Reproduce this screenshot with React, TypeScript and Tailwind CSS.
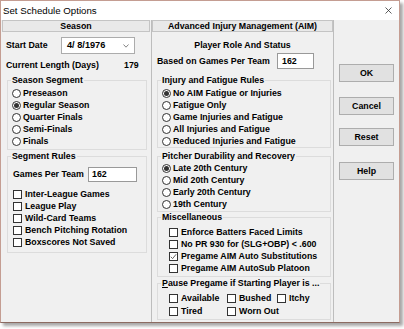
const F = "font-['Liberation_Sans',Arial,sans-serif]";

function Radio({ label, on = false }: { label: string; on?: boolean }) {
  return (
    <div className="flex h-[12px] items-center">
      <span className="flex h-[9px] w-[9px] shrink-0 items-center justify-center rounded-full border border-[#333] bg-white">
        {on && <span className="h-[5px] w-[5px] rounded-full bg-[#333]" />}
      </span>
      <span className="ml-[2px] whitespace-nowrap">{label}</span>
    </div>
  );
}

function Check({ label, on = false, h = "h-[12px]" }: { label: string; on?: boolean; h?: string }) {
  return (
    <div className={`flex items-center ${h}`}>
      <span className="flex h-[9px] w-[9px] shrink-0 items-center justify-center border border-[#333] bg-white">
        {on && (
          <svg width="7" height="7" viewBox="0 0 7 7">
            <polyline points="0.8,3.8 2.6,5.6 6.2,1.2" fill="none" stroke="#555" strokeWidth="0.9" />
          </svg>
        )}
      </span>
      <span className="ml-[3px] whitespace-nowrap">{label}</span>
    </div>
  );
}

function Btn({ label, mt }: { label: string; mt: string }) {
  return (
    <button className={`${mt} flex h-[18px] w-[55px] items-center justify-center border border-[#adadad] bg-[#e1e1e1] font-bold`}>
      {label}
    </button>
  );
}

export default function App() {
  return (
    <div className={`h-[329px] w-[404px] bg-white ${F} text-[8.8px] font-bold leading-[11px] text-black`}>
      <div className="flex h-[323px] w-[400px] flex-col border border-[#c49d92] border-b-[#8c6b62] bg-[#f0f0f0] shadow-[3px_3px_3px_rgba(0,0,0,0.35)]">
        {/* title bar */}
        <div className="flex h-[19px] items-center justify-between bg-white pl-[2px] pr-[7px]">
          <span className="text-[9.7px] font-normal">Set Schedule Options</span>
          <svg width="7" height="7" viewBox="0 0 7 7">
            <path d="M0.5 0.5 L6.5 6.5 M6.5 0.5 L0.5 6.5" stroke="#333" strokeWidth="0.8" />
          </svg>
        </div>

        <div className="flex flex-1">
          {/* Season column */}
          <div className="flex w-[150px] flex-col">
            <div className="mx-[1px] flex h-[12px] items-center justify-center border border-[#c4c4c4] bg-[#e9e9e9]">
              Season
            </div>

            <div className="mt-[5px] flex h-[17px] items-center pl-[5px]">
              <span className="w-[55px]">Start Date</span>
              <div className="flex h-[17px] w-[74px] items-center justify-between border border-[#acacac] bg-white pl-[5px] pr-[5px]">
                <span className="text-[9.2px]">4/ 8/1976</span>
                <svg width="6" height="4" viewBox="0 0 6 4">
                  <polyline points="0.5,0.5 3,3.2 5.5,0.5" fill="none" stroke="#666" strokeWidth="0.8" />
                </svg>
              </div>
            </div>

            <div className="mt-[5px] flex h-[12px] items-center pl-[5px]">
              <span className="w-[118px]">Current Length (Days)</span>
              <span>179</span>
            </div>

            <fieldset className="ml-[6px] mt-[4px] w-[140px] border border-[#dcdcdc] pb-[2px] pl-[4px] pt-[1px]">
              <legend className="-ml-[1px] px-[1px] leading-[11px]">Season Segment</legend>
              <Radio label="Preseason" />
              <Radio label="Regular Season" on />
              <Radio label="Quarter Finals" />
              <Radio label="Semi-Finals" />
              <Radio label="Finals" />
            </fieldset>

            <fieldset className="ml-[6px] mt-[1px] w-[140px] border border-[#dcdcdc] pb-[4px] pl-[5px] pt-[5px]">
              <legend className="-ml-[2px] px-[1px] leading-[11px]">Segment Rules</legend>
              <div className="flex h-[15px] items-center">
                <span className="w-[75px]">Games Per Team</span>
                <div className="flex h-[15px] w-[49px] items-center border border-[#999] bg-white pl-[3px]">162</div>
              </div>
              <div className="mt-[6px]">
                <Check label="Inter-League Games" />
                <Check label="League Play" />
                <Check label="Wild-Card Teams" />
                <Check label="Bench Pitching Rotation" />
                <Check label="Boxscores Not Saved" />
              </div>
            </fieldset>
          </div>

          {/* AIM column */}
          <div className="flex w-[183px] flex-col border-x border-[#bdbdbd]">
            <div className="flex h-[12px] items-center justify-center border border-[#c4c4c4] bg-[#e9e9e9]">
              Advanced Injury Management (AIM)
            </div>

            <div className="mt-[7px] flex h-[12px] items-center justify-center">Player Role And Status</div>

            <div className="mt-[2px] flex h-[16px] items-center pl-[5px]">
              <span className="w-[120px]">Based on Games Per Team</span>
              <div className="flex h-[16px] w-[37px] items-center border border-[#999] bg-white pl-[4px]">162</div>
            </div>

            <fieldset className="ml-[5px] mt-[6px] w-[174px] border border-[#dcdcdc] pl-[4px] pt-[1px]">
              <legend className="-ml-[1px] px-[1px] leading-[11px]">Injury and Fatigue Rules</legend>
              <Radio label="No AIM Fatigue or Injuries" on />
              <Radio label="Fatigue Only" />
              <Radio label="Game Injuries and Fatigue" />
              <Radio label="All Injuries and Fatigue" />
              <Radio label="Reduced Injuries and Fatigue" />
            </fieldset>

            <fieldset className="ml-[5px] mt-[3px] w-[174px] border border-[#dcdcdc] pb-[1px] pl-[4px]">
              <legend className="-ml-[1px] px-[1px] leading-[11px]">Pitcher Durability and Recovery</legend>
              <Radio label="Late 20th Century" on />
              <Radio label="Mid 20th Century" />
              <Radio label="Early 20th Century" />
              <Radio label="19th Century" />
            </fieldset>

            <fieldset className="ml-[5px] w-[174px] border border-[#dcdcdc] pb-[2px] pl-[11px] pt-[3px]">
              <legend className="-ml-[8px] px-[1px] leading-[11px]">Miscellaneous</legend>
              <Check label="Enforce Batters Faced Limits" />
              <Check label={"No PR 930 for (SLG+OBP) < .600"} />
              <Check label="Pregame AIM Auto Substitutions" on />
              <Check label="Pregame AIM AutoSub Platoon" />
            </fieldset>

            <fieldset className="ml-[5px] mt-[1px] w-[174px] border border-[#dcdcdc] pb-[1px] pl-[11px] pt-[3px]">
              <legend className="-ml-[8px] px-[1px] leading-[11px]">
                <span className="underline">P</span>ause Pregame if Starting Player is ...
              </legend>
              <div className="grid grid-cols-[58px_50px_auto]">
                <Check label="Available" h="h-[13px]" />
                <Check label="Bushed" h="h-[13px]" />
                <Check label="Itchy" h="h-[13px]" />
                <Check label="Tired" h="h-[13px]" />
                <Check label="Worn Out" h="h-[13px]" />
              </div>
            </fieldset>
          </div>

          {/* buttons */}
          <div className="flex flex-1 flex-col pl-[5px]">
            <Btn label="OK" mt="mt-[44px]" />
            <Btn label="Cancel" mt="mt-[15px]" />
            <Btn label="Reset" mt="mt-[13px]" />
            <Btn label="Help" mt="mt-[16px]" />
          </div>
        </div>
      </div>
    </div>
  );
}
